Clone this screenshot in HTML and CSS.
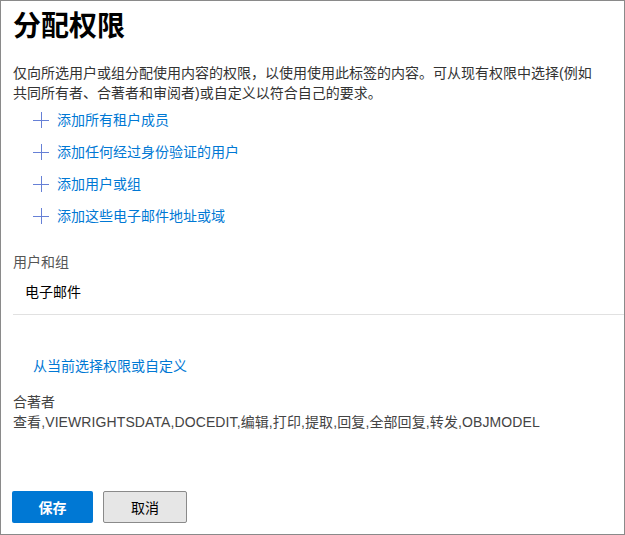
FILE: index.html
```html
<!DOCTYPE html>
<html lang="zh-CN">
<head>
<meta charset="utf-8">
<link rel="stylesheet" href="styles.css">
</head>
<body>
<div class="window">
  <h1 class="title">分配权限</h1>
  <p class="desc">仅向所选用户或组分配使用内容的权限，以使用使用此标签的内容。可从现有权限中选择(例如共同所有者、合著者和审阅者)或自定义以符合自己的要求。</p>
  <ul class="adds">
    <li class="add"><svg class="plus" width="16" height="16" viewBox="0 0 16 16"><path d="M0 8.5H16M8.5 0V16" stroke="#6680d6" stroke-width="1"/></svg><a class="link">添加所有租户成员</a></li>
    <li class="add"><svg class="plus" width="16" height="16" viewBox="0 0 16 16"><path d="M0 8.5H16M8.5 0V16" stroke="#6680d6" stroke-width="1"/></svg><a class="link">添加任何经过身份验证的用户</a></li>
    <li class="add"><svg class="plus" width="16" height="16" viewBox="0 0 16 16"><path d="M0 8.5H16M8.5 0V16" stroke="#6680d6" stroke-width="1"/></svg><a class="link">添加用户或组</a></li>
    <li class="add"><svg class="plus" width="16" height="16" viewBox="0 0 16 16"><path d="M0 8.5H16M8.5 0V16" stroke="#6680d6" stroke-width="1"/></svg><a class="link">添加这些电子邮件地址或域</a></li>
  </ul>
  <div class="section-label">用户和组</div>
  <div class="table-row">电子邮件</div>
  <a class="link choose">从当前选择权限或自定义</a>
  <div class="perm-name">合著者</div>
  <div class="perm-list">查看,VIEWRIGHTSDATA,DOCEDIT,编辑,打印,提取,回复,全部回复,转发,OBJMODEL</div>
  <div class="actions">
    <button class="btn btn-primary">保存</button>
    <button class="btn btn-default">取消</button>
  </div>
</div>
</body>
</html>
```
FILE: styles.css
```css
* { box-sizing: border-box; }
html, body { margin: 0; padding: 0; background: #fff; }
body {
  font-family: "Liberation Sans", "Noto Sans CJK SC", sans-serif;
  color: #333;
}
.window {
  width: 625px;
  height: 535px;
  border: 1px solid #8a8a8a;
  padding: 0 0 0 12px;
  display: flex;
  flex-direction: column;
  overflow: hidden;
}
.title {
  margin: 8px 0 0 0;
  font-size: 28px;
  line-height: 36px;
  font-weight: 700;
  color: #000;
}
.desc {
  margin: 18px 24px 0 0;
  font-size: 14px;
  line-height: 20px;
  color: #333;
}
.adds {
  list-style: none;
  margin: 7px 0 0 0;
  padding: 0 0 0 20px;
  display: flex;
  flex-direction: column;
  gap: 12px;
}
.add {
  display: flex;
  align-items: center;
  gap: 8px;
  height: 20px;
}
.plus { flex: none; }
.link {
  color: #0078d4;
  font-size: 14px;
  line-height: 20px;
  text-decoration: none;
}
.section-label {
  margin-top: 26px;
  font-size: 14px;
  line-height: 20px;
  color: #555;
}
.table-row {
  margin-top: 10px;
  padding: 0 0 12px 12px;
  font-size: 14px;
  line-height: 20px;
  color: #000;
  border-bottom: 1px solid #e1e1e1;
}
.choose {
  margin: 41px 0 0 20px;
  align-self: flex-start;
}
.perm-name {
  margin-top: 17px;
  font-size: 14px;
  line-height: 19px;
  color: #444;
}
.perm-list {
  margin-top: 1px;
  font-size: 14px;
  line-height: 19px;
  letter-spacing: 0.1px;
  color: #444;
}
.actions {
  margin: auto 0 11px -1px;
  display: flex;
  gap: 10px;
}
.btn {
  height: 32px;
  font-family: inherit;
  font-size: 14px;
  border-radius: 2px;
  padding: 0;
  cursor: pointer;
}
.btn-primary {
  width: 81px;
  background: #0078d4;
  color: #fff;
  border: none;
  font-weight: 700;
}
.btn-default {
  width: 84px;
  background: #e6e6e6;
  color: #000;
  border: 1px solid #8a8a8a;
}
```
